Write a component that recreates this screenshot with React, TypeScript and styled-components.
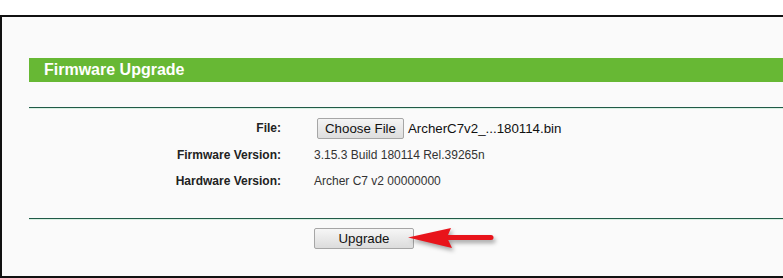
import React, { FC } from "react";
import styled, { createGlobalStyle } from "styled-components";

const GlobalStyle = createGlobalStyle`
    html, body {
        margin: 0;
        padding: 0;
        background: #ffffff;
        font-family: "Liberation Sans", Arial, sans-serif;
    }
`;

type Row = { label: string; value: string };

const rows: Row[] = [
    { label: "Firmware Version:", value: "3.15.3 Build 180114 Rel.39265n" },
    { label: "Hardware Version:", value: "Archer C7 v2 00000000" },
];

const App: FC = () => {
    return (
        <>
            <GlobalStyle />
            <Page>
                <Frame>
                    <TitleBar>Firmware Upgrade</TitleBar>
                    <Divider />
                    <Form>
                        <Label>File:</Label>
                        <Value>
                            <FileButton type="button">Choose File</FileButton>
                            <FileName>ArcherC7v2_...180114.bin</FileName>
                        </Value>
                        {rows.map((row) => (
                            <React.Fragment key={row.label}>
                                <Label>{row.label}</Label>
                                <Value>{row.value}</Value>
                            </React.Fragment>
                        ))}
                    </Form>
                    <Divider />
                    <Actions>
                        <UpgradeButton type="button">Upgrade</UpgradeButton>
                        <Arrow width="100" height="32" viewBox="0 0 100 32">
                            <line
                                x1="48"
                                y1="14.5"
                                x2="91"
                                y2="14.5"
                                stroke="#e8141b"
                                strokeWidth="5"
                                strokeLinecap="round"
                            />
                            <path d="M8 14.5 L51 5 L47 14.5 L52 25 Z" fill="#e8141b" />
                        </Arrow>
                    </Actions>
                </Frame>
            </Page>
        </>
    );
};

export default App;

const Page = styled.div`
    padding-top: 15px;
    height: 278px;
    box-sizing: border-box;
    overflow: hidden;
`;

const Frame = styled.div`
    width: 800px;
    height: 263px;
    box-sizing: border-box;
    border: 2px solid #111111;
    background: #fafafa;
    padding: 41px 0 0 27px;
`;

const TitleBar = styled.div`
    height: 24px;
    line-height: 24px;
    background: #67b834;
    color: #ffffff;
    font-size: 16px;
    font-weight: bold;
    padding-left: 15px;
`;

const Divider = styled.div`
    margin-top: 25px;
    height: 1px;
    background: #1f5a47;
    border-bottom: 1px solid #d8f0e2;
`;

const Form = styled.div`
    display: grid;
    grid-template-columns: 252px 1fr;
    column-gap: 33px;
    grid-auto-rows: 26.5px;
    align-items: center;
    padding-top: 6px;
    padding-bottom: 23px;
    font-size: 12px;
    color: #222222;

    & + ${Divider} {
        margin-top: 0;
    }
`;

const Label = styled.div`
    text-align: right;
    font-weight: bold;
`;

const Value = styled.div`
    display: flex;
    align-items: center;
    color: #333333;
`;

const FileButton = styled.button`
    height: 21px;
    padding: 0 7px;
    margin-left: 3px;
    font-family: "Liberation Sans", Arial, sans-serif;
    font-size: 13.3px;
    color: #111111;
    background: linear-gradient(#f4f4f4, #dedede);
    border: 1px solid #a6a6a6;
    border-radius: 2px;
`;

const FileName = styled.span`
    margin-left: 4px;
    font-size: 13.3px;
    color: #111111;
`;

const Actions = styled.div`
    position: relative;
    padding: 8px 0 0 285px;
`;

const UpgradeButton = styled.button`
    width: 100px;
    height: 21px;
    font-family: "Liberation Sans", Arial, sans-serif;
    font-size: 13.3px;
    color: #111111;
    background: linear-gradient(#f6f6f6, #dcdcdc);
    border: 1px solid #a6a6a6;
    border-radius: 2px;
`;

const Arrow = styled.svg`
    position: absolute;
    left: 371px;
    top: 3px;
    filter: drop-shadow(2px 3px 2px rgba(0, 0, 0, 0.35));
`;
